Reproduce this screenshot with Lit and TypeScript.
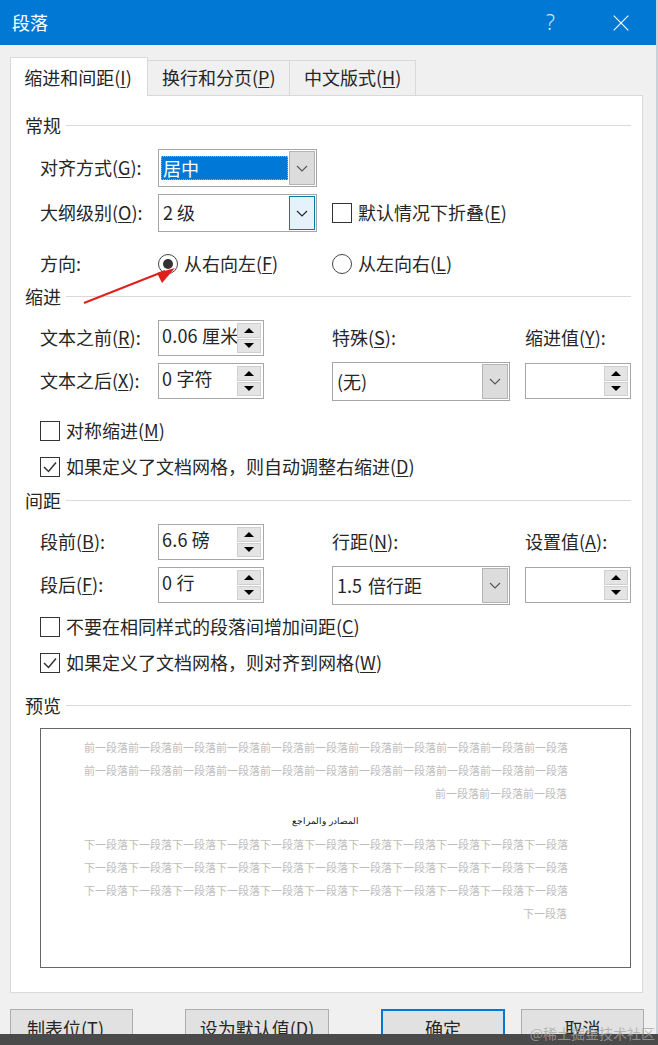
import { LitElement, html, css, svg } from 'lit';
import { customElement } from 'lit/decorators.js';

// label text with the mnemonic letter underlined, e.g. 对齐方式(G):
const mn = (before: string, key: string, after = '') =>
  html`${before}(<u>${key}</u>)${after}`;

const combo = (text: string, kind = '') => html`
  <div class="combo ${kind}">
    <div class="combo-value"><span>${text}</span></div>
    <div class="combo-btn">
      <svg width="12" height="7" viewBox="0 0 12 7"><path d="M1 1l5 5 5-5" fill="none" stroke="currentColor" stroke-width="1.1" /></svg>
    </div>
  </div>
`;

const spin = (text = '') => html`
  <div class="spin">
    <div class="spin-value">${text}</div>
    <div class="spin-btns">
      <div class="spin-btn"><i class="up"></i></div>
      <div class="spin-btn"><i class="down"></i></div>
    </div>
  </div>
`;

const check = (on: boolean) => html`
  <span class="check">
    ${on
      ? svg`<svg width="18" height="18" viewBox="0 0 18 18"><path d="M3 9l4.5 4.5L15 4.5" fill="none" stroke="#333" stroke-width="1.5" /></svg>`
      : ''}
  </span>
`;

const radio = (on: boolean) => html`<span class="radio">${on ? html`<i></i>` : ''}</span>`;

const before = '前一段落';
const after = '下一段落';

@customElement('app-root')
export class AppRoot extends LitElement {
  private _heading(text: string) {
    return html`<div class="heading"><span>${text}</span><i></i></div>`;
  }

  protected override render() {
    return html`
      <div class="dialog">
        <div class="titlebar">
          <span class="title">段落</span>
          <span class="help">?</span>
          <svg class="close" width="16" height="16" viewBox="0 0 16 16">
            <path d="M.7.7l14.6 14.6M15.3.7L.7 15.3" stroke="#fff" stroke-width="1.1" fill="none" />
          </svg>
        </div>

        <div class="body">
          <div class="tabs">
            <div class="tab active">${mn('缩进和间距', 'I')}</div>
            <div class="tab">${mn('换行和分页', 'P')}</div>
            <div class="tab">${mn('中文版式', 'H')}</div>
          </div>

          <div class="panel">
            ${this._heading('常规')}
            <div class="grid g1">
              <label>${mn('对齐方式', 'G', ':')}</label>
              ${combo('居中', 'selected')}
            </div>
            <div class="grid g2">
              <label>${mn('大纲级别', 'O', ':')}</label>
              ${combo('2 级', 'focused')}
              <div class="opt">${check(false)}<span>${mn('默认情况下折叠', 'E')}</span></div>
            </div>
            <div class="grid g3">
              <label>方向:</label>
              <div class="opt">${radio(true)}<span>${mn('从右向左', 'F')}</span></div>
              <div class="opt">${radio(false)}<span>${mn('从左向右', 'L')}</span></div>
            </div>

            ${this._heading('缩进')}
            <div class="grid g4">
              <label>${mn('文本之前', 'R', ':')}</label>
              ${spin('0.06 厘米')}
              <label>${mn('特殊', 'S', ':')}</label>
              <label>${mn('缩进值', 'Y', ':')}</label>
            </div>
            <div class="grid g5">
              <label>${mn('文本之后', 'X', ':')}</label>
              ${spin('0 字符')}
              ${combo('(无)', 'wide')}
              ${spin()}
            </div>
            <div class="opt line l1">${check(false)}<span>${mn('对称缩进', 'M')}</span></div>
            <div class="opt line l2">${check(true)}<span>如果定义了文档网格，则自动调整右缩进(<u>D</u>)</span></div>

            ${this._heading('间距')}
            <div class="grid g6">
              <label>${mn('段前', 'B', ':')}</label>
              ${spin('6.6 磅')}
              <label>${mn('行距', 'N', ':')}</label>
              <label>${mn('设置值', 'A', ':')}</label>
            </div>
            <div class="grid g7">
              <label>${mn('段后', 'F', ':')}</label>
              ${spin('0 行')}
              ${combo('1.5 倍行距', 'wide')}
              ${spin()}
            </div>
            <div class="opt line l3">${check(false)}<span>不要在相同样式的段落间增加间距(<u>C</u>)</span></div>
            <div class="opt line l4">${check(true)}<span>如果定义了文档网格，则对齐到网格(<u>W</u>)</span></div>

            ${this._heading('预览')}
            <div class="preview">
              <div>${before.repeat(11)}</div>
              <div>${before.repeat(11)}</div>
              <div>${before.repeat(3)}</div>
              <div class="sample" dir="rtl">المصادر والمراجع</div>
              <div>${after.repeat(11)}</div>
              <div>${after.repeat(11)}</div>
              <div>${after.repeat(11)}</div>
              <div>${after}</div>
            </div>
          </div>

          <div class="buttons">
            <button class="tabstop">${mn('制表位', 'T')}</button>
            <button class="defaults">${mn('设为默认值', 'D')}</button>
            <button class="primary">确定</button>
            <button class="cancel">取消</button>
          </div>
        </div>
      </div>

      <div class="edge"></div>

      <svg class="arrow" width="200" height="60" viewBox="0 0 200 60">
        <path d="M84 53L165 21" stroke="#e0201c" stroke-width="2" fill="none" />
        <path d="M175 18L157 23L162 33Z" fill="#e0201c" />
      </svg>

      <div class="strip"></div>
      <div class="watermark">@稀土掘金技术社区</div>
    `;
  }

  static override styles = css`
    :host {
      display: block;
      position: relative;
      width: 658px;
      height: 1045px;
      overflow: hidden;
      background: #f0f0f0;
      color: #262626;
      font-family: 'Noto Sans CJK SC', 'Noto Sans', sans-serif;
      font-size: 18px;
      line-height: 26px;
    }
    u {
      text-underline-offset: 2px;
      text-decoration-thickness: 1px;
    }
    .dialog {
      width: 656px;
    }
    .edge {
      position: absolute;
      top: 0;
      right: 0;
      width: 2px;
      height: 100%;
      background: #c8d2d9;
    }
    .titlebar {
      height: 45px;
      box-sizing: border-box;
      background: #0078d4;
      color: #fff;
      display: flex;
      align-items: center;
      padding: 0 27px 2px 12px;
    }
    .title {
      flex: 1;
    }
    .help {
      font-family: 'Noto Sans', sans-serif;
      font-weight: 300;
      font-size: 21px;
      color: #cfe6f7;
      margin-right: 58px;
    }
    .close {
      margin-top: 2px;
    }
    .body {
      padding: 12px 13px 0 10px;
    }
    .tabs {
      display: flex;
      align-items: flex-end;
      height: 39px;
      position: relative;
      z-index: 1;
      margin-bottom: -1px;
    }
    .tab {
      height: 36px;
      padding: 0 14px 2px;
      display: flex;
      align-items: center;
      border: 1px solid #d9d9d9;
      border-left: none;
      box-sizing: border-box;
      background: #f0f0f0;
      white-space: nowrap;
    }
    .tab.active {
      height: 39px;
      width: 138px;
      justify-content: center;
      padding: 0 2px 0 0;
      background: #fff;
      border-left: 1px solid #d9d9d9;
      border-bottom: none;
    }
    .tab:nth-child(2) {
      width: 142px;
    }
    .tab:nth-child(3) {
      width: 126px;
    }
    .panel {
      background: #fff;
      border: 1px solid #d9d9d9;
      padding: 16px 11px 24px 14px;
    }
    .heading {
      display: flex;
      align-items: center;
      height: 26px;
      gap: 5px;
    }
    .heading span {
      padding-bottom: 1px;
    }
    .heading + .grid {
      margin-top: 11px;
    }
    .heading i {
      flex: 1;
      height: 1px;
      background: #d9d9d9;
    }
    .grid {
      display: grid;
      grid-template-columns: 118px 174px 193px 106px;
      align-items: center;
      padding-left: 15px;
    }
    .grid label {
      padding-bottom: 2px;
    }
    .g1 { height: 38px; }
    .g2 { height: 38px; margin-top: 7px; }
    .g3 { height: 26px; margin-top: 18px; margin-bottom: 7px; }
    .g4, .g6 { height: 36px; }
    .g5, .g7 { height: 39px; margin-top: 6px; }
    .g5 label, .g7 label { padding-bottom: 4px; }
    .g5 .spin, .g7 .spin {
      align-self: start;
      margin-top: 1px;
    }
    .line { padding-left: 15px; height: 26px; }
    .l1 { margin-top: 17px; }
    .l2 { margin-top: 10px; margin-bottom: 7px; }
    .l3 { margin-top: 9px; }
    .l4 { margin-top: 10px; margin-bottom: 16px; }
    .opt {
      display: flex;
      align-items: center;
      gap: 6px;
      white-space: nowrap;
    }
    .opt span:last-child {
      padding-bottom: 2px;
    }
    .check {
      width: 20px;
      height: 20px;
      box-sizing: border-box;
      border: 1px solid #333;
      display: flex;
      align-items: center;
      justify-content: center;
    }
    .opt .radio {
      width: 20px;
      height: 20px;
      box-sizing: border-box;
      border: 1px solid #444;
      border-radius: 50%;
      display: flex;
      align-items: center;
      justify-content: center;
    }
    .radio i {
      width: 10px;
      height: 10px;
      border-radius: 50%;
      background: #333;
    }
    .combo {
      width: 159px;
      height: 38px;
      box-sizing: border-box;
      border: 1px solid #a6a6a6;
      display: flex;
      background: #fff;
    }
    .combo.wide {
      width: 178px;
      height: 39px;
      word-spacing: 2px;
    }
    .combo-value {
      flex: 1;
      padding: 0 4px 2px;
      display: flex;
      align-items: center;
    }
    .combo-btn {
      width: 26px;
      margin: 1px;
      box-sizing: border-box;
      border: 1px solid #b4b4b4;
      background: #dcdcdc;
      color: #555;
      display: flex;
      align-items: center;
      justify-content: center;
    }
    .selected .combo-value {
      padding: 0 0 0 1px;
      margin: 6px 0 6px 1px;
    }
    .selected .combo-value span {
      flex: 1;
      line-height: 24px;
      padding-left: 2px;
      background: #0078d7;
      color: #fff;
      outline: 1px dotted #7fb6e6;
      outline-offset: -1px;
    }
    .focused .combo-btn {
      background: #e5f1fb;
      border-color: #0a78a8;
      color: #222;
    }
    .spin {
      width: 106px;
      height: 36px;
      box-sizing: border-box;
      border: 1px solid #a6a6a6;
      display: flex;
      background: #fff;
    }
    .spin-value {
      flex: 1;
      min-width: 0;
      overflow: hidden;
      white-space: nowrap;
      padding: 1px 0 0 3px;
      letter-spacing: 0.2px;
    }
    .spin-btns {
      width: 24px;
      margin: 2px 2px 2px 0;
      display: flex;
      flex-direction: column;
      gap: 1px;
    }
    .spin-btn {
      flex: 1;
      background: #e4e4e4;
      border: 1px solid #cfcfcf;
      box-sizing: border-box;
      display: flex;
      align-items: center;
      justify-content: center;
    }
    .spin-btn i {
      width: 0;
      height: 0;
      border-left: 5px solid transparent;
      border-right: 5px solid transparent;
    }
    .spin-btn .up {
      border-bottom: 5px solid #000;
    }
    .spin-btn .down {
      border-top: 5px solid #000;
    }
    .preview {
      margin: 10px 0 0 15px;
      height: 240px;
      box-sizing: border-box;
      border: 1px solid #666;
      padding: 7px 63px 0 43px;
      font-size: 11px;
      line-height: 23px;
      color: #bdbdbd;
      text-align: right;
      white-space: nowrap;
    }
    .preview .sample {
      margin-top: 5px;
      text-align: center;
      color: #111;
      font-family: 'Liberation Sans', sans-serif;
      font-size: 9px;
    }
    .buttons {
      display: flex;
      margin-top: 16px;
    }
    button {
      height: 38px;
      box-sizing: border-box;
      background: #e1e1e1;
      border: 1px solid #adadad;
      color: #262626;
      font: inherit;
      padding: 0;
      flex: none;
    }
    .tabstop {
      width: 123px;
      padding-right: 12px;
    }
    .defaults {
      width: 144px;
      margin-left: 52px;
    }
    button.primary {
      width: 124px;
      margin-left: 52px;
      border: 2px solid #0078d7;
    }
    .cancel {
      width: 123px;
      margin-left: 16px;
    }
    .arrow {
      position: absolute;
      left: 0;
      top: 250px;
    }
    .strip {
      position: absolute;
      left: 0;
      right: 0;
      bottom: 0;
      height: 11px;
      background: #4a4a4a;
    }
    .watermark {
      position: absolute;
      right: 3px;
      bottom: 2px;
      font-size: 14px;
      line-height: 20px;
      color: rgba(165, 165, 165, 0.75);
      white-space: nowrap;
    }
  `;
}

declare global {
  interface HTMLElementTagNameMap {
    'app-root': AppRoot;
  }
}
